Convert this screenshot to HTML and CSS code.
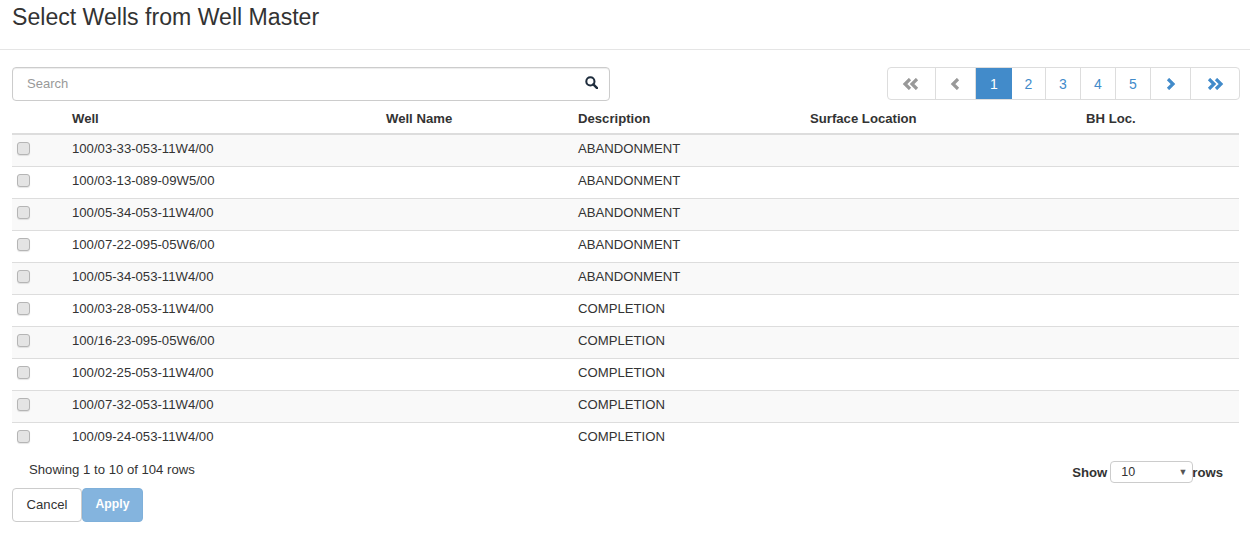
FILE: index.html
```html
<!DOCTYPE html>
<html lang="en">
<head>
<meta charset="utf-8">
<title>Select Wells from Well Master</title>
<link rel="stylesheet" href="styles.css">
</head>
<body>
<header class="modal-header"><h1 class="title">Select Wells from Well Master</h1></header>
<main class="modal-body">
  <div class="toolbar">
    <div class="search">
      <input class="search-input" type="text" placeholder="Search">
      <svg class="search-icon" viewBox="0 0 14 14" width="13" height="13"><circle cx="5.8" cy="5.8" r="4.4" fill="none" stroke="#1f2d3d" stroke-width="2.2"/><path d="M9 9l4 4" stroke="#1f2d3d" stroke-width="2.6" stroke-linecap="round"/></svg>
    </div>
    <nav class="pager">
      <a class="pg pg-first muted"><svg class="shift" viewBox="0 0 18 12" width="18" height="12"><path d="M8 1L3 6l5 5M15 1l-5 5 5 5" fill="none" stroke="currentColor" stroke-width="3.2"/></svg></a>
      <a class="pg pg-prev muted"><svg class="shift" viewBox="0 0 10 12" width="10" height="12"><path d="M8 1L3 6l5 5" fill="none" stroke="currentColor" stroke-width="3.2"/></svg></a>
      <a class="pg pg-active">1</a>
      <a class="pg pg-two">2</a>
      <a class="pg pg-num">3</a>
      <a class="pg pg-num">4</a>
      <a class="pg pg-num">5</a>
      <a class="pg pg-next"><svg viewBox="0 0 10 12" width="10" height="12"><path d="M2 1l5 5-5 5" fill="none" stroke="currentColor" stroke-width="3.2"/></svg></a>
      <a class="pg pg-last"><svg viewBox="0 0 18 12" width="18" height="12"><path d="M3 1l5 5-5 5M10 1l5 5-5 5" fill="none" stroke="currentColor" stroke-width="3.2"/></svg></a>
    </nav>
  </div>
  <table class="grid">
    <colgroup><col class="c0"><col class="c1"><col class="c2"><col class="c3"><col class="c4"><col></colgroup>
    <thead><tr><th></th><th>Well</th><th>Well Name</th><th>Description</th><th>Surface Location</th><th>BH Loc.</th></tr></thead>
    <tbody>
      <tr><td class="chk"><input class="box" type="checkbox"></td><td>100/03-33-053-11W4/00</td><td></td><td>ABANDONMENT</td><td></td><td></td></tr>
      <tr><td class="chk"><input class="box" type="checkbox"></td><td>100/03-13-089-09W5/00</td><td></td><td>ABANDONMENT</td><td></td><td></td></tr>
      <tr><td class="chk"><input class="box" type="checkbox"></td><td>100/05-34-053-11W4/00</td><td></td><td>ABANDONMENT</td><td></td><td></td></tr>
      <tr><td class="chk"><input class="box" type="checkbox"></td><td>100/07-22-095-05W6/00</td><td></td><td>ABANDONMENT</td><td></td><td></td></tr>
      <tr><td class="chk"><input class="box" type="checkbox"></td><td>100/05-34-053-11W4/00</td><td></td><td>ABANDONMENT</td><td></td><td></td></tr>
      <tr><td class="chk"><input class="box" type="checkbox"></td><td>100/03-28-053-11W4/00</td><td></td><td>COMPLETION</td><td></td><td></td></tr>
      <tr><td class="chk"><input class="box" type="checkbox"></td><td>100/16-23-095-05W6/00</td><td></td><td>COMPLETION</td><td></td><td></td></tr>
      <tr><td class="chk"><input class="box" type="checkbox"></td><td>100/02-25-053-11W4/00</td><td></td><td>COMPLETION</td><td></td><td></td></tr>
      <tr><td class="chk"><input class="box" type="checkbox"></td><td>100/07-32-053-11W4/00</td><td></td><td>COMPLETION</td><td></td><td></td></tr>
      <tr><td class="chk"><input class="box" type="checkbox"></td><td>100/09-24-053-11W4/00</td><td></td><td>COMPLETION</td><td></td><td></td></tr>
    </tbody>
  </table>
  <div class="table-foot">
    <span class="showing">Showing 1 to 10 of 104 rows</span>
    <div class="page-size">
      <span>Show</span>
      <span class="size-select">10<i class="caret">▼</i></span>
      <span>rows</span>
    </div>
  </div>
  <div class="actions">
    <button class="btn btn-cancel" type="button">Cancel</button>
    <button class="btn btn-apply" type="button">Apply</button>
  </div>
</main>
</body>
</html>
```

FILE: styles.css
```css
* { box-sizing: border-box; }
html, body { margin: 0; padding: 0; }
body {
  width: 1250px;
  height: 533px;
  overflow: hidden;
  background: #fff;
  font-family: "Liberation Sans", Arial, sans-serif;
  font-size: 13.15px;
  color: #333;
}
.modal-header {
  height: 50px;
  padding: 4px 12px 0;
  border-bottom: 1px solid #e5e5e5;
}
.title {
  margin: 0;
  font-size: 23.1px;
  font-weight: 400;
  line-height: 26px;
  color: #333;
}
.modal-body { padding: 17px 11px 0 12px; }
.toolbar {
  display: flex;
  justify-content: space-between;
  align-items: flex-start;
  height: 34px;
}
.search { position: relative; width: 598px; height: 34px; }
.search-input {
  display: block;
  width: 100%;
  height: 100%;
  padding: 0 30px 2px 14px;
  border: 1px solid #ccc;
  border-radius: 4px;
  box-shadow: inset 0 1px 1px rgba(0,0,0,.075);
  font: 13px "Liberation Sans", Arial, sans-serif;
  color: #555;
  outline: none;
}
.search-input::placeholder { color: #999; opacity: 1; }
.search-icon { position: absolute; right: 12px; top: 9px; }
.pager {
  display: flex;
  height: 33px;
  margin-right: -1px;
  border: 1px solid #ddd;
  border-radius: 4px;
  overflow: hidden;
}
.pg {
  display: flex;
  align-items: center;
  justify-content: center;
  height: 100%;
  border-right: 1px solid #ddd;
  color: #428bca;
  font-size: 14px;
}
.pg:last-child { border-right: 0; }
.pg-first { width: 48px; }
.pg-prev { width: 40px; }
.pg-active { width: 36px; background: #428bca; color: #fff; border-right: 0; }
.pg-two { width: 34px; }
.pg-num { width: 35px; }
.pg-next { width: 40px; }
.pg-last { width: 48px; }
.muted { color: #999; }
.shift { margin-right: 2px; }
.grid {
  width: 1227px;
  border-collapse: collapse;
  table-layout: fixed;
}
.c0 { width: 52px; }
.c1 { width: 314px; }
.c2 { width: 192px; }
.c3 { width: 232px; }
.c4 { width: 276px; }
.grid th {
  height: 33px;
  padding: 2px 8px 0;
  text-align: left;
  font-weight: 700;
  border-bottom: 2px solid #ddd;
}
.grid td {
  height: 32px;
  padding: 0 8px 4px;
  border-top: 1px solid #ddd;
  vertical-align: middle;
}
.grid thead + tbody tr:first-child td { border-top: 0; }
.grid tbody tr:nth-child(odd) td { background: #f9f9f9; }
.grid tbody tr:last-child td { background: #fff; }
.grid td.chk { padding: 0 0 4px 5px; }
.box {
  appearance: none;
  display: block;
  width: 13px;
  height: 13px;
  margin: 0;
  border: 1px solid #b5b5b5;
  border-radius: 3px;
  background: #e4e4e4;
  box-shadow: 0 1px 1px rgba(0,0,0,.1);
}
.table-foot {
  display: flex;
  justify-content: space-between;
  align-items: flex-start;
  height: 34px;
  padding: 0 16px 0 17px;
}
.showing { margin-top: 8px; }
.page-size {
  display: flex;
  align-items: center;
  margin-top: 7px;
  font-weight: 700;
}
.size-select {
  position: relative;
  width: 83px;
  height: 22px;
  margin-left: 3px;
  margin-right: -1px;
  padding-left: 10px;
  border: 1px solid #ccc;
  border-radius: 4px;
  font-size: 12.5px;
  font-weight: 400;
  line-height: 20px;
  color: #333;
}
.caret {
  position: absolute;
  right: 5px;
  top: 0;
  font-size: 9px;
  font-style: normal;
  color: #555;
}
.actions { display: flex; }
.btn {
  height: 34px;
  padding: 0 0 2px;
  border-radius: 4px;
  font: 13.1px "Liberation Sans", Arial, sans-serif;
}
.btn-cancel { width: 70px; background: #fff; border: 1px solid #ccc; color: #333; }
.btn-apply { width: 61px; background: #84b4de; border: 1px solid #7fb0da; color: #fff; font-weight: 700; font-size: 12.2px; }
```
